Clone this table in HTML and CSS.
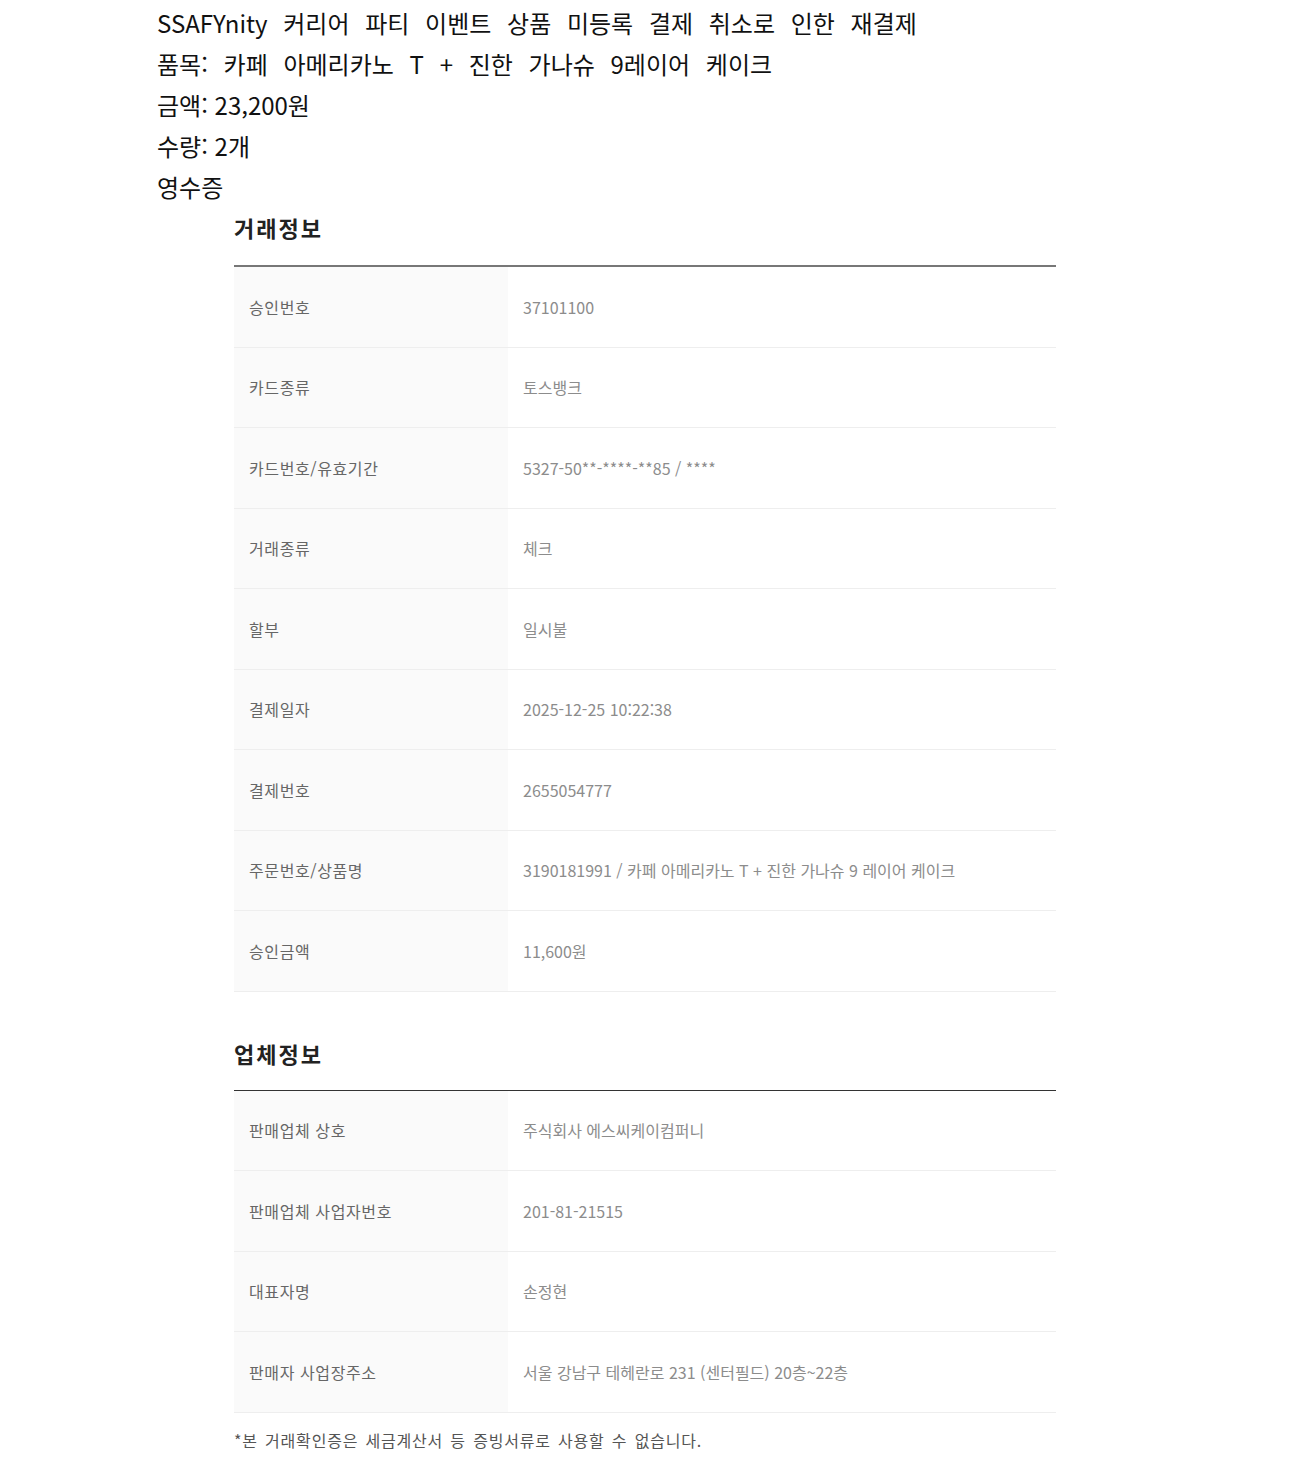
FILE: index.html
```html
<!DOCTYPE html>
<html lang="ko">
<head>
<meta charset="utf-8">
<link rel="stylesheet" href="styles.css">
</head>
<body>
<div class="page">
  <div class="intro">
    <p class="line line-wide">SSAFYnity 커리어 파티 이벤트 상품 미등록 결제 취소로 인한 재결제</p>
    <p class="line line-wide">품목: 카페 아메리카노 T + 진한 가나슈 9레이어 케이크</p>
    <p class="line">금액: 23,200원</p>
    <p class="line">수량: 2개</p>
    <p class="line">영수증</p>
  </div>
  <div class="receipt">
    <h2 class="sec-title">거래정보</h2>
    <div class="table table-gray">
      <div class="row"><div class="label">승인번호</div><div class="value">37101100</div></div>
      <div class="row"><div class="label">카드종류</div><div class="value">토스뱅크</div></div>
      <div class="row"><div class="label">카드번호/유효기간</div><div class="value">5327-50**-****-**85 / ****</div></div>
      <div class="row"><div class="label">거래종류</div><div class="value">체크</div></div>
      <div class="row"><div class="label">할부</div><div class="value">일시불</div></div>
      <div class="row"><div class="label">결제일자</div><div class="value">2025-12-25 10:22:38</div></div>
      <div class="row"><div class="label">결제번호</div><div class="value">2655054777</div></div>
      <div class="row"><div class="label">주문번호/상품명</div><div class="value">3190181991 / 카페 아메리카노 T + 진한 가나슈 9 레이어 케이크</div></div>
      <div class="row"><div class="label">승인금액</div><div class="value">11,600원</div></div>
    </div>
    <h2 class="sec-title sec-second">업체정보</h2>
    <div class="table table-dark">
      <div class="row"><div class="label">판매업체 상호</div><div class="value">주식회사 에스씨케이컴퍼니</div></div>
      <div class="row"><div class="label">판매업체 사업자번호</div><div class="value">201-81-21515</div></div>
      <div class="row"><div class="label">대표자명</div><div class="value">손정현</div></div>
      <div class="row"><div class="label">판매자 사업장주소</div><div class="value">서울 강남구 테헤란로 231 (센터필드) 20층~22층</div></div>
    </div>
    <p class="note">*본 거래확인증은 세금계산서 등 증빙서류로 사용할 수 없습니다.</p>
  </div>
</div>
</body>
</html>
```

FILE: styles.css
```css
html, body {
  margin: 0;
  padding: 0;
  background: #ffffff;
}
body {
  font-family: "Noto Sans CJK KR", "Noto Sans", sans-serif;
  color: #000;
}
.page {
  width: 978px;
  margin: 0 auto 0 157px;
  padding-top: 2px;
}
.intro .line {
  margin: 0;
  font-size: 24px;
  line-height: 41px;
  color: #111;
}
.intro .line-wide {
  word-spacing: 9px;
}
.receipt {
  width: 822px;
  margin-left: 77px;
}
.sec-title {
  margin: 0 0 14px 0;
  padding: 0 0 4px 0;
  font-size: 22px;
  line-height: 40px;
  font-weight: 700;
  color: #222;
  letter-spacing: 2px;
}
.sec-second {
  margin-top: 39px;
  padding-top: 2px;
  padding-bottom: 3px;
}
.table-gray {
  border-top: 2px solid #777;
}
.table-dark {
  border-top: 1.5px solid #333;
}
.row {
  display: flex;
  height: 80.5px;
  box-sizing: border-box;
  border-bottom: 1px solid #eeeeee;
}
.label {
  width: 274px;
  flex: none;
  background: #fafafa;
  padding-left: 15px;
  box-sizing: border-box;
  display: flex;
  align-items: center;
  font-size: 16px;
  color: #666;
  letter-spacing: 0.6px;
}
.value {
  flex: 1;
  padding-left: 15px;
  display: flex;
  align-items: center;
  font-size: 16px;
  color: #8c8c8c;
  letter-spacing: 0;
}
.note {
  margin: 15px 0 0 0;
  font-size: 16px;
  line-height: 24px;
  color: #555;
  letter-spacing: 0.8px;
  word-spacing: 2px;
}
```
